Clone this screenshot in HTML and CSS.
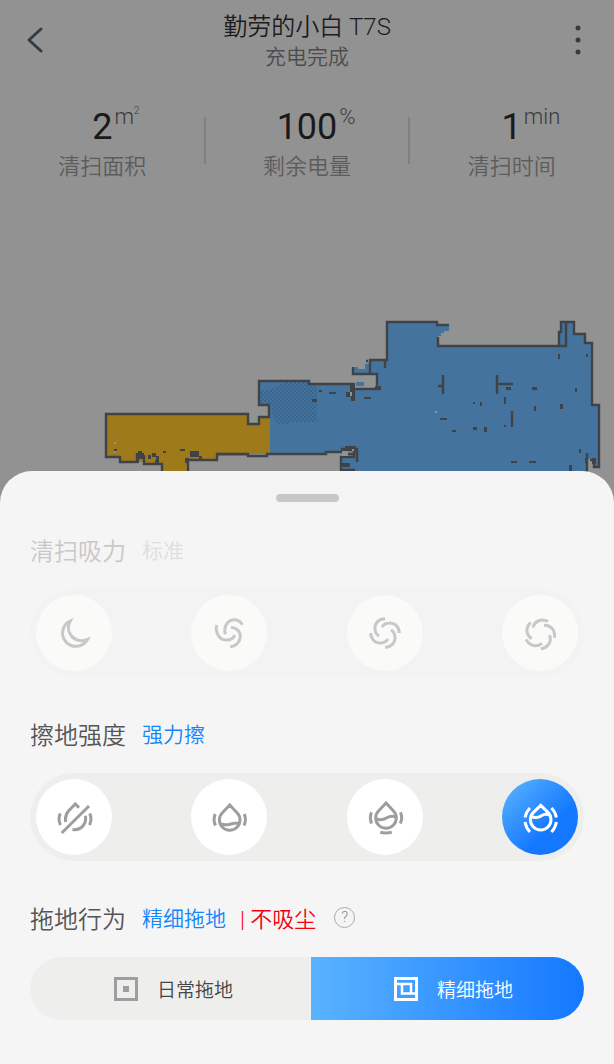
FILE: index.html
```html
<!DOCTYPE html>
<html lang="zh-CN">

<head>
    <meta charset="UTF-8">
    <meta name="viewport" content="width=device-width, initial-scale=1.0">
    <title>勤劳的小白 T7S</title>
    <link rel="stylesheet" href="styles.css">
</head>

<body>

    <header class="topbar">
        <button class="nav-btn" aria-label="返回">
            <svg width="20" height="30" viewBox="0 0 20 30">
                <path d="M15 4L3 15L15 26" fill="none" stroke="#323c46" stroke-width="3" stroke-linecap="round" stroke-linejoin="round" />
            </svg>
        </button>
        <div class="heading">
            <h1>勤劳的小白 T7S</h1>
            <p>充电完成</p>
        </div>
        <button class="nav-btn" aria-label="更多">
            <svg width="6" height="30" viewBox="0 0 6 30" fill="#323c46">
                <circle cx="3" cy="3" r="2.5" />
                <circle cx="3" cy="15" r="2.5" />
                <circle cx="3" cy="27" r="2.5" />
            </svg>
        </button>
    </header>

    <section class="stats">
        <div class="stat">
            <div class="value"><b>2</b><span>m<sup>2</sup></span></div>
            <div class="label">清扫面积</div>
        </div>
        <div class="stat">
            <div class="value"><b>100</b><span>%</span></div>
            <div class="label">剩余电量</div>
        </div>
        <div class="stat">
            <div class="value"><b>1</b><span>min</span></div>
            <div class="label">清扫时间</div>
        </div>
    </section>

    <svg class="map" viewBox="0 300 614 200">
        <defs>
            <pattern id="carpet" width="4" height="4" patternUnits="userSpaceOnUse">
                <path d="M0 0h2v2h-2zM2 2h2v2h-2z" fill="#3a658c" />
            </pattern>
        </defs>
        <!-- rooms -->
        <path fill="#9e7a1b" d="M106 414H248V424H259V417H270V454H248V456H217V460H188V500H162V464H144V462H120V457H106Z" />
        <path fill="#44739e" d="M259 381H309V384H355V389H377V374H353V367H358V369H365V364H370V360H387V322H437V325H449V331H444V333H441V336H438V346H559V332H561V322H574V334H585V343H592V405H599V467H594V459H588V500H341V457H354V449H342V452H326V454H270V417H269V405H259Z" />
        <path fill="#44739e" d="M356 382H364V386H356Z" />
        <path fill="url(#carpet)" d="M260 390H270L286 382H309V385H317V422H288V424H277L272 414V404H260Z" />
        <!-- walls -->
        <g fill="none" stroke="#3f4347" stroke-width="2.4">
            <path d="M162 500V464H144V455M137 453V462H120V457H106V414H248V424H259V417H269V405H259V381H309V384H354M188 500V460H217V454H248V456H267V454H326V452H342V449H357V462" />
            <path d="M355 389H381M377 389V374H353V367M370 374V360H387V322H437V325H449M385 360V368M438 337V346H566V323M559 346V332H561V322H574V334H585V343H592V405H599V467H594V460H590M587 453V500" />
            <path d="M341 500V457H354V450M345 450H357M348 454H355M341 470H355M368 361H366M443 375V394M438 386H443M497 375V394M497 384H513M512 411V427" />
        </g>
        <!-- obstacles -->
        <path fill="#3f4347" d="M350 383h5v18h-4v-4h-5v-5h4zM319 390h3v2h-3zM312 399h5v3h-5zM329 392h7v2h-7zM364 397h7v2h-7zM375 386h6v4h-6zM345 446h11v5h-11zM342 463h8v4h-8zM343 449h5v3h-5zM136 453h8v6h-5v4h-2zM138 451h4v4h-4zM152 453h4v4h-4zM156 456h3v8h-4v-4h1zM163 451h3v2h-3zM180 449h5v2h-5zM190 451h9v6h-9zM199 456h3v3h-3zM185 458h4v5h-4zM114 449h3v2h-3zM148 455h3v4h-3z" />
        <path fill="#3f4347" d="M558 354h2v5h-2zM586 354h2v3h-2zM506 387h5v3h-5zM532 387h5v3h-5zM575 388h2v4h-2zM504 397h2v7h-2zM473 402h2v2h-2zM480 402h2v4h-2zM534 406h2v5h-2zM560 404h3v5h-3zM440 418h7v2h-7zM452 430h4v2h-4zM473 427h4v3h-4zM484 427h3v5h-3zM504 425h2v2h-2zM579 449h2v4h-2zM511 461h6v2h-6zM529 461h7v2h-7zM569 465h3v6h-3zM585 458h3v5h-3zM592 458h4v6h-4z" />
        <path fill="#929292" d="M350 392h2v4h-2zM435 411h2v2h-2zM342 451h6v5h-6zM352 449h2v2h-2zM114 442h2v2h-2zM114 451h2v2h-2z" />
    </svg>

    <main class="sheet">
        <div class="handle"></div>

        <section class="group off">
            <h2>清扫吸力 <span>标准</span></h2>
            <div class="track">
                <button disabled aria-label="安静">
                    <svg viewBox="-19 -19 38 38">
                        <path d="M-3.8 -12A13.3 13.3 0 1 0 13.5 6.5C8 9 1 7.5 -2.5 3C-6 -1 -6.5 -7 -3.8 -12Z" />
                    </svg>
                </button>
                <button disabled aria-label="标准">
                    <svg viewBox="-19 -19 38 38">
                        <path d="M-12.3 -8C-14 -1 -10 6.5 -3.5 7C1 7.3 4.5 5.5 5.7 2" />
                        <path d="M-3.7 1.3C-5.5 -5 -2.5 -12 3.5 -13C8 -13.7 12 -11.5 13.3 -8.3" />
                        <path d="M2 -5.7C7.5 -5.5 11.5 -1.5 11.3 3.5C11 9 7 13.5 1.3 13.7" />
                    </svg>
                </button>
                <button disabled aria-label="强力">
                    <svg viewBox="-19 -19 38 38">
                        <path id="arm4" d="M0 -14.3C-7 -14 -10.5 -9 -10 -4C-9.8 -1 -8.5 1.5 -6 3" />
                        <use href="#arm4" transform="rotate(90)" />
                        <use href="#arm4" transform="rotate(180)" />
                        <use href="#arm4" transform="rotate(270)" />
                    </svg>
                </button>
                <button disabled aria-label="最大">
                    <svg viewBox="-19 -20 38 38">
                        <path id="arm5" d="M-7 -6.5C-5.5 -13 1.5 -16 8 -12.5" />
                        <use href="#arm5" transform="rotate(72)" />
                        <use href="#arm5" transform="rotate(144)" />
                        <use href="#arm5" transform="rotate(216)" />
                        <use href="#arm5" transform="rotate(288)" />
                    </svg>
                </button>
            </div>
        </section>

        <section class="group">
            <h2>擦地强度 <span>强力擦</span></h2>
            <div class="track">
                <button aria-label="关闭">
                    <svg viewBox="-19 -19 38 38">
                        <path d="M5 -9.3L1.3 -13L-5.5 -6C-8.5 -2.5 -9 1 -8.3 5M11.4 -1.3C13 7 7 14 -1.5 12.5M15 -11L-12.3 16M-13.7 -3.5Q-16.3 2 -13.5 8M15.7 -3.5Q18.3 2 15.5 8" />
                    </svg>
                </button>
                <button aria-label="轻擦">
                    <svg viewBox="-19 -19 38 38">
                        <path d="M.7 -12L-6.6 -4.3A10.3 10.3 0 1 0 8 -4.3ZM-8.5 7Q-4 8.5 1 7.2T10 6M-13.7 -3Q-16.3 2.5 -13.5 8.5M15.2 -3Q17.8 2.5 15 8.5" />
                    </svg>
                </button>
                <button aria-label="标准擦">
                    <svg viewBox="-19 -19 38 38">
                        <path d="M1 -14L-6.3 -6.3A10.3 10.3 0 1 0 8.3 -6.3ZM-9 2C-4 3.5 -1 2.5 1.5 1S7 -1.5 11 0M-13.5 -4.7Q-16 1 -13.3 6.5M15.5 -4.7Q18 1 15.3 6.5M-4.7 15.2Q1 16.7 6.7 15.2" />
                    </svg>
                </button>
                <button class="active" aria-label="强力擦">
                    <svg viewBox="-19 -19 38 38">
                        <path d="M.7 -11.7L-6.6 -4.6A10.3 10.3 0 1 0 8 -4.6ZM-9 -.5C-5 1 -2 1 1 -1S7 -3 9 -2M-10 -9Q-14 -5 -15 .5M-15 5Q-14 11 -10 15M11.4 -9Q15.4 -5 16.4 .5M16.4 5Q15.4 11 11.4 15" />
                    </svg>
                </button>
            </div>
        </section>

        <section class="group">
            <h2>拖地行为 <span>精细拖地</span> <em>| 不吸尘</em>
                <button class="help" aria-label="帮助">?</button>
            </h2>
            <div class="switch">
                <button>
                    <svg viewBox="0 0 24 24">
                        <path d="M1.5 1.5H22.5V22.5H1.5Z" />
                        <path d="M9 12H15" stroke-width="6" />
                    </svg>
                    日常拖地
                </button>
                <button class="active">
                    <svg viewBox="0 0 24 24">
                        <path d="M1.5 1.5H22.5V22.5H1.5Z" />
                        <path d="M3 7H17V16M8 7V16.5H22" stroke-width="2.5" />
                    </svg>
                    精细拖地
                </button>
            </div>
        </section>
    </main>

</body>

</html>
```
FILE: styles.css
```css
* {
    box-sizing: border-box;
}

body {
    margin: 0;
    min-height: 100vh;
    display: flex;
    flex-direction: column;
    background-color: #929292;
    font-family: Roboto, "Noto Sans CJK SC", sans-serif;
    font-weight: 350;
}

h1, h2, p {
    margin: 0;
    font-weight: 350;
}

button {
    padding: 0;
    border: none;
    background: none;
    font: inherit;
    cursor: pointer;
}

svg {
    display: block;
}

/* top */
.topbar {
    display: flex;
    align-items: center;
    justify-content: space-between;
    height: 80px;
    padding: 0 24px;
}

.nav-btn {
    width: 24px;
    height: 40px;
    display: flex;
    align-items: center;
    justify-content: center;
}

.heading {
    padding-top: 2px;
    text-align: center;
}

h1 {
    font-size: 24px;
    line-height: 32px;
    color: #1c1c1c;
}

.heading p {
    font-size: 21px;
    line-height: 28px;
    color: #4c4c4c;
}

/* numbers */
.stats {
    display: grid;
    grid-template-columns: repeat(3, 1fr);
    margin-top: 24px;
    height: 196px;
}

.stat {
    position: relative;
    text-align: center;
}

.stat + .stat::before {
    content: "";
    position: absolute;
    left: -1px;
    top: 13px;
    width: 2px;
    height: 47px;
    background-color: #808080;
}

.value {
    display: grid;
    grid-template-columns: 1fr auto 1fr;
    height: 47px;
}

.value b {
    grid-column: 2;
    font-size: 36px;
    line-height: 46px;
    font-weight: 400;
    color: #1a1a1a;
}

.value span {
    padding-left: 2px;
    font-size: 22px;
    line-height: 26px;
    text-align: left;
    color: #3c3c3c;
}

.value sup {
    font-size: 10px;
    line-height: 1;
    vertical-align: 10px;
}

.label {
    font-size: 22px;
    line-height: 32px;
    color: #5c5c5c;
}

.map {
    width: 100%;
}

/* bottom sheet */
.sheet {
    position: relative;
    flex: 1;
    margin-top: -29px;
    padding: 23px 30px 45px;
    border-radius: 32px 32px 0 0;
    background-color: #f5f5f5;
}

.handle {
    width: 63px;
    height: 8px;
    margin: 0 auto;
    border-radius: 4px;
    background-color: #c8c8c8;
}

.group {
    padding-top: 30px;
}

.group + .group {
    padding-top: 39px;
}

h2 {
    display: flex;
    align-items: center;
    height: 34px;
    margin-bottom: 23px;
    font-size: 24px;
    color: #555;
}

h2 span {
    margin-left: 16px;
    font-size: 21px;
    color: #1485fa;
}

h2 em {
    margin-left: 14px;
    font-size: 22px;
    font-style: normal;
    color: #f5000c;
}

.help {
    width: 21px;
    height: 21px;
    margin-left: 18px;
    border: 1px solid #aaa;
    border-radius: 50%;
    font-size: 15px;
    line-height: 19px;
    color: #888;
}

.track {
    display: flex;
    justify-content: space-between;
    padding: 6px;
    border-radius: 44px;
    background-color: #eeeeec;
}

.track button {
    width: 76px;
    height: 76px;
    border-radius: 50%;
    background-color: #fff;
    color: #9e9e9e;
}

.track svg {
    width: 38px;
    height: 38px;
    margin: 0 auto;
    fill: none;
    stroke: currentColor;
    stroke-width: 3;
}

.track .active {
    background: linear-gradient(135deg, #52adff 10%, #1478ff 65%);
    color: #fff;
}

.off h2 {
    color: #c8c8c8;
}

.off h2 span {
    color: #dedede;
}

.off .track {
    background-color: #f3f3f3;
}

.off .track button {
    background-color: #fafaf9;
    color: #c8c8c8;
}

.switch {
    display: grid;
    grid-template-columns: 281fr 273fr;
    height: 63px;
    border-radius: 32px;
    overflow: hidden;
    background-color: #eeeeec;
}

.switch button {
    display: flex;
    align-items: center;
    justify-content: center;
    gap: 19px;
    padding-left: 6px;
    font-size: 19px;
    color: #444;
}

.switch svg {
    width: 24px;
    height: 24px;
    fill: none;
    stroke: #9e9e9e;
    stroke-width: 3;
}

.switch .active {
    padding-left: 12px;
    background: linear-gradient(90deg, #5ab3ff, #1478ff);
    color: #fff;
}

.switch .active svg {
    stroke: #fff;
}
```
